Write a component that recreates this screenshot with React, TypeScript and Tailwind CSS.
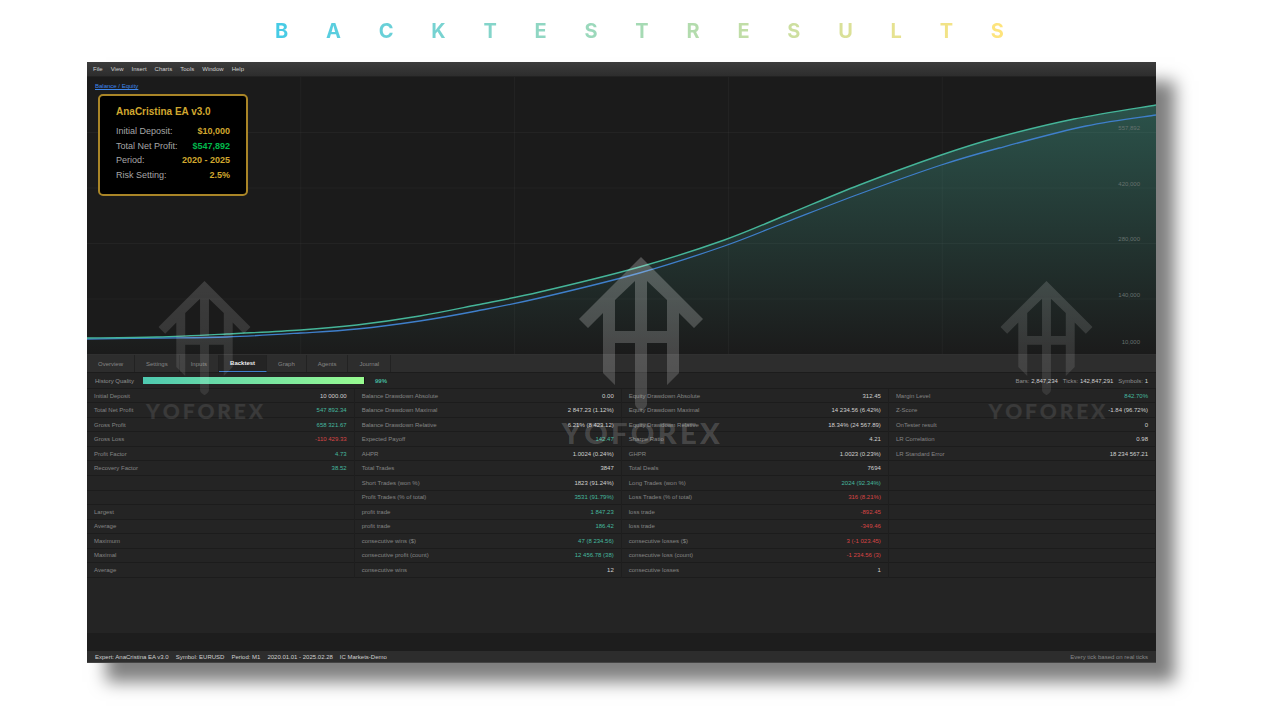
import { clsx } from 'clsx';

type Tone = 'plain' | 'up' | 'down';
type Stat = [label: string, value?: string, tone?: Tone];

const MENU = ['File', 'View', 'Insert', 'Charts', 'Tools', 'Window', 'Help'];
const TABS = ['Overview', 'Settings', 'Inputs', 'Backtest', 'Graph', 'Agents', 'Journal'];

const ROWS: Stat[][] = [
  [['Initial Deposit', '10 000.00'], ['Balance Drawdown Absolute', '0.00'], ['Equity Drawdown Absolute', '312.45'], ['Margin Level', '842.70%', 'up']],
  [['Total Net Profit', '547 892.34', 'up'], ['Balance Drawdown Maximal', '2 847.23 (1.12%)'], ['Equity Drawdown Maximal', '14 234.56 (6.42%)'], ['Z-Score', '-1.84 (96.72%)']],
  [['Gross Profit', '658 321.67', 'up'], ['Balance Drawdown Relative', '6.21% (8 423.12)'], ['Equity Drawdown Relative', '18.34% (24 567.89)'], ['OnTester result', '0']],
  [['Gross Loss', '-110 429.33', 'down'], ['Expected Payoff', '142.47', 'up'], ['Sharpe Ratio', '4.21'], ['LR Correlation', '0.98']],
  [['Profit Factor', '4.73', 'up'], ['AHPR', '1.0024 (0.24%)'], ['GHPR', '1.0023 (0.23%)'], ['LR Standard Error', '18 234 567.21']],
  [['Recovery Factor', '38.52', 'up'], ['Total Trades', '3847'], ['Total Deals', '7694'], ['']],
  [[''], ['Short Trades (won %)', '1823 (91.24%)'], ['Long Trades (won %)', '2024 (92.34%)', 'up'], ['']],
  [[''], ['Profit Trades (% of total)', '3531 (91.79%)', 'up'], ['Loss Trades (% of total)', '316 (8.21%)', 'down'], ['']],
  [['Largest'], ['profit trade', '1 847.23', 'up'], ['loss trade', '-892.45', 'down'], ['']],
  [['Average'], ['profit trade', '186.42', 'up'], ['loss trade', '-349.46', 'down'], ['']],
  [['Maximum'], ['consecutive wins ($)', '47 (8 234.56)', 'up'], ['consecutive losses ($)', '3 (-1 023.45)', 'down'], ['']],
  [['Maximal'], ['consecutive profit (count)', '12 456.78 (38)', 'up'], ['consecutive loss (count)', '-1 234.56 (3)', 'down'], ['']],
  [['Average'], ['consecutive wins', '12'], ['consecutive losses', '1'], ['']],
];

const TONES: Record<Tone, string> = {
  plain: 'text-[#d0d0d0]',
  up: 'text-[#45b89f]',
  down: 'text-[#d84444]',
};

const BALANCE = [[0, 261], [70, 260], [140, 257], [214, 253], [270, 248], [333, 239], [390, 228], [453, 215], [553, 190], [638, 163], [700, 138], [773, 108], [855, 78], [913, 60], [988, 42], [1070, 28]];
const EQUITY = [[0, 262], [70, 261], [140, 260], [214, 256], [270, 252], [333, 244], [390, 234], [453, 221], [553, 196], [638, 169], [700, 145], [773, 117], [855, 88], [913, 71], [1000, 49], [1070, 38]];

// Catmull-Rom through the points, written out as cubic segments
function smooth(p: number[][]) {
  let d = `M${p[0][0]},${p[0][1]}`;
  for (let i = 0; i < p.length - 1; i++) {
    const a = p[i - 1] ?? p[i];
    const b = p[i];
    const c = p[i + 1];
    const e = p[i + 2] ?? c;
    d += ` C${b[0] + (c[0] - a[0]) / 6},${b[1] + (c[1] - a[1]) / 6} ${c[0] - (e[0] - b[0]) / 6},${c[1] - (e[1] - b[1]) / 6} ${c[0]},${c[1]}`;
  }
  return d;
}

function Spread({ text, className }: { text: string; className: string }) {
  return (
    <span className={clsx('flex justify-between', className)}>
      {text.split('').map((letter, i) => (
        <span key={i}>{letter}</span>
      ))}
    </span>
  );
}

function Watermark({ large = false, className }: { large?: boolean; className: string }) {
  const id = large ? 'wm-large' : 'wm-small';
  return (
    <div className={clsx('pointer-events-none absolute flex -translate-x-1/2 flex-col items-center', className)}>
      <svg viewBox="0 0 124 154" className={large ? 'w-[124px]' : 'w-[92px]'} aria-hidden="true">
        <defs>
          <linearGradient id={id} x1="0" y1="0" x2="0" y2="1">
            <stop offset="0" stopColor="#fff" stopOpacity={large ? 0.24 : 0.15} />
            <stop offset="1" stopColor="#fff" stopOpacity={large ? 0.16 : 0.09} />
          </linearGradient>
        </defs>
        <path
          fill={`url(#${id})`}
          d="M62 0 124 62 115 71 100 56V116L88 128V86H68V147Q68 149 66 151L62 154 58 151Q56 149 56 147V86H36V128L24 116V56L9 71 0 62ZM56 24 36 43V74H56ZM68 24V74H88V43Z"
          fillRule="evenodd"
        />
      </svg>
      <Spread
        text="YOFOREX"
        className={clsx(
          "font-['Lato'] font-black",
          large ? 'mt-1 w-[158px] text-[29px] leading-9 text-white/18' : 'mt-0.5 w-[117px] text-[21px] leading-7 text-white/10',
        )}
      />
    </div>
  );
}

function SummaryRow({ label, value, green }: { label: string; value: string; green?: boolean }) {
  return (
    <div className="flex flex-1 items-center justify-between">
      <dt className="text-[#a6a6a6]">{label}</dt>
      <dd className={clsx('font-bold', green ? 'text-[#00b84c]' : 'text-[#d0a72f]')}>{value}</dd>
    </div>
  );
}

function Chart() {
  return (
    <section className="relative min-h-[240px] flex-1 bg-[#1b1b1b]">
      <svg viewBox="0 0 1070 277" preserveAspectRatio="none" className="absolute inset-0 h-full w-full" aria-hidden="true">
        <defs>
          <linearGradient id="area" x1="0" y1="28" x2="0" y2="277" gradientUnits="userSpaceOnUse">
            <stop offset="0" stopColor="#4ec9b0" stopOpacity="0.32" />
            <stop offset="1" stopColor="#4ec9b0" stopOpacity="0" />
          </linearGradient>
        </defs>
        <g stroke="#fff" strokeOpacity="0.04">
          {[214, 428, 642, 856].map((x) => <line key={x} x1={x} x2={x} y1="0" y2="277" />)}
          {[55.5, 111, 166.5, 222].map((y) => <line key={y} x1="0" x2="1070" y1={y} y2={y} />)}
        </g>
        <path d={`${smooth(BALANCE)} V277 H0 Z`} fill="url(#area)" />
        <path d={smooth(EQUITY)} fill="none" stroke="#3f7fcb" strokeWidth="1.3" />
        <path d={smooth(BALANCE)} fill="none" stroke="#45b599" strokeWidth="1.4" />
      </svg>

      {/* Axis values sit just above their grid lines */}
      <div className="absolute inset-y-0 right-4 grid grid-rows-5 text-[6px] leading-[8px] text-[#66716e]">
        {['557,892', '420,000', '280,000', '140,000'].map((v) => (
          <span key={v} className="flex items-end justify-end">{v}</span>
        ))}
        <span className="flex items-end justify-end pb-2">10,000</span>
      </div>

      <a href="#equity" className="absolute top-1 left-2 text-[6px] leading-[10px] text-[#3d86ea] underline">Balance / Equity</a>

      <div className="absolute top-[17px] left-[11px] flex h-[102px] w-[150px] flex-col rounded-[5px] border-2 border-[#a98527] bg-black px-4 pt-2 pb-3">
        <h2 className="text-[10px] leading-[16px] font-bold text-[#d0a72f]">AnaCristina EA v3.0</h2>
        <dl className="mt-1 flex h-[58px] flex-col text-[9px] leading-[14px]">
          <SummaryRow label="Initial Deposit:" value="$10,000" />
          <SummaryRow label="Total Net Profit:" value="$547,892" green />
          <SummaryRow label="Period:" value="2020 - 2025" />
          <SummaryRow label="Risk Setting:" value="2.5%" />
        </dl>
      </div>
    </section>
  );
}

function StatsTable() {
  return (
    <table className="h-[189px] w-full table-fixed border-collapse text-[6px] leading-[8px]">
      <tbody>
        {ROWS.map((row, r) => (
          <tr key={r} className="border-b border-[#1c1c1c]">
            {row.flatMap(([label, value, tone = 'plain'], c) => [
              <td key={`l${c}`} className="pl-[7px] whitespace-nowrap text-[#858585]">{label}</td>,
              <td key={`v${c}`} className={clsx('border-r border-[#1e1e1e] pr-[7px] text-right whitespace-nowrap', TONES[tone])}>{value}</td>,
            ])}
          </tr>
        ))}
      </tbody>
    </table>
  );
}

export default function App() {
  return (
    <main className="flex min-h-screen flex-col bg-white pr-[124px] pb-[57px] pl-[87px] font-['Liberation_Sans',sans-serif]">
      <h1 className="mr-[62px] ml-[98px] flex h-[62px] items-center px-[90px]" aria-label="Backtest results">
        <Spread text="BACKTESTRESULTS" className="w-full bg-linear-to-r from-[#45cbe6] via-[#a5dab4] to-[#ffe47c] bg-clip-text font-['Inter'] text-[20px] leading-7 font-bold text-transparent" />
      </h1>

      <div className="relative flex flex-1 flex-col bg-[#242424] shadow-[19px_19px_16px_rgba(0,0,0,0.5)]">
        <nav className="flex h-[15px] items-center gap-2 border-b border-[#222] bg-linear-to-b from-[#3c3c3c] to-[#2d2d2d] px-1.5 text-[6px] leading-[8px] text-[#d0d0d0]">
          {MENU.map((item) => <button key={item} type="button">{item}</button>)}
        </nav>

        <Chart />

        <div role="tablist" className="flex h-[18px] border-t border-[#303030] bg-[#2d2d2d] text-[6px] leading-[8px]">
          {TABS.map((tab) => (
            <button
              key={tab}
              type="button"
              role="tab"
              aria-selected={tab === 'Backtest'}
              className={clsx(
                'border-r border-r-[#222] px-[11px]',
                tab === 'Backtest' ? 'border-b border-b-[#3f7fcb] bg-[#242424] font-bold text-[#eee]' : 'text-[#858585]',
              )}
            >
              {tab}
            </button>
          ))}
        </div>

        <div className="flex h-[17px] items-center border-y border-[#1c1c1c] px-2 text-[6px] leading-[8px] text-[#909090]">
          <span className="w-12">History Quality</span>
          <div className="h-[7px] w-[222px] bg-[#151515]">
            <div className="h-full w-[99.5%] bg-linear-to-r from-[#4ec9b0] to-[#98fb90]" />
          </div>
          <span className="ml-2.5 font-bold text-[#45b89f]">99%</span>
          <div className="ml-auto flex gap-[5px]">
            <span>Bars: <span className="text-[#d0d0d0]">2,847,234</span></span>
            <span>Ticks: <span className="text-[#d0d0d0]">142,847,291</span></span>
            <span>Symbols: <span className="text-[#d0d0d0]">1</span></span>
          </div>
        </div>

        <StatsTable />
        <div className="h-[55px]" />
        <div className="h-[18px] bg-[#1d1d1d]" />

        <footer className="flex h-3 items-center gap-[7px] border-b border-[#444] bg-[#2d2d2d] px-2 text-[6px] leading-[8px] text-[#d0d0d0]">
          <span>Expert: AnaCristina EA v3.0</span>
          <span>Symbol: EURUSD</span>
          <span>Period: M1</span>
          <span>2020.01.01 - 2025.02.28</span>
          <span>IC Markets-Demo</span>
          <span className="ml-auto text-[#888]">Every tick based on real ticks</span>
        </footer>

        <Watermark className="bottom-[238px] left-[11%]" />
        <Watermark large className="bottom-[212px] left-[51.8%]" />
        <Watermark className="bottom-[238px] left-[89.8%]" />
      </div>
    </main>
  );
}
